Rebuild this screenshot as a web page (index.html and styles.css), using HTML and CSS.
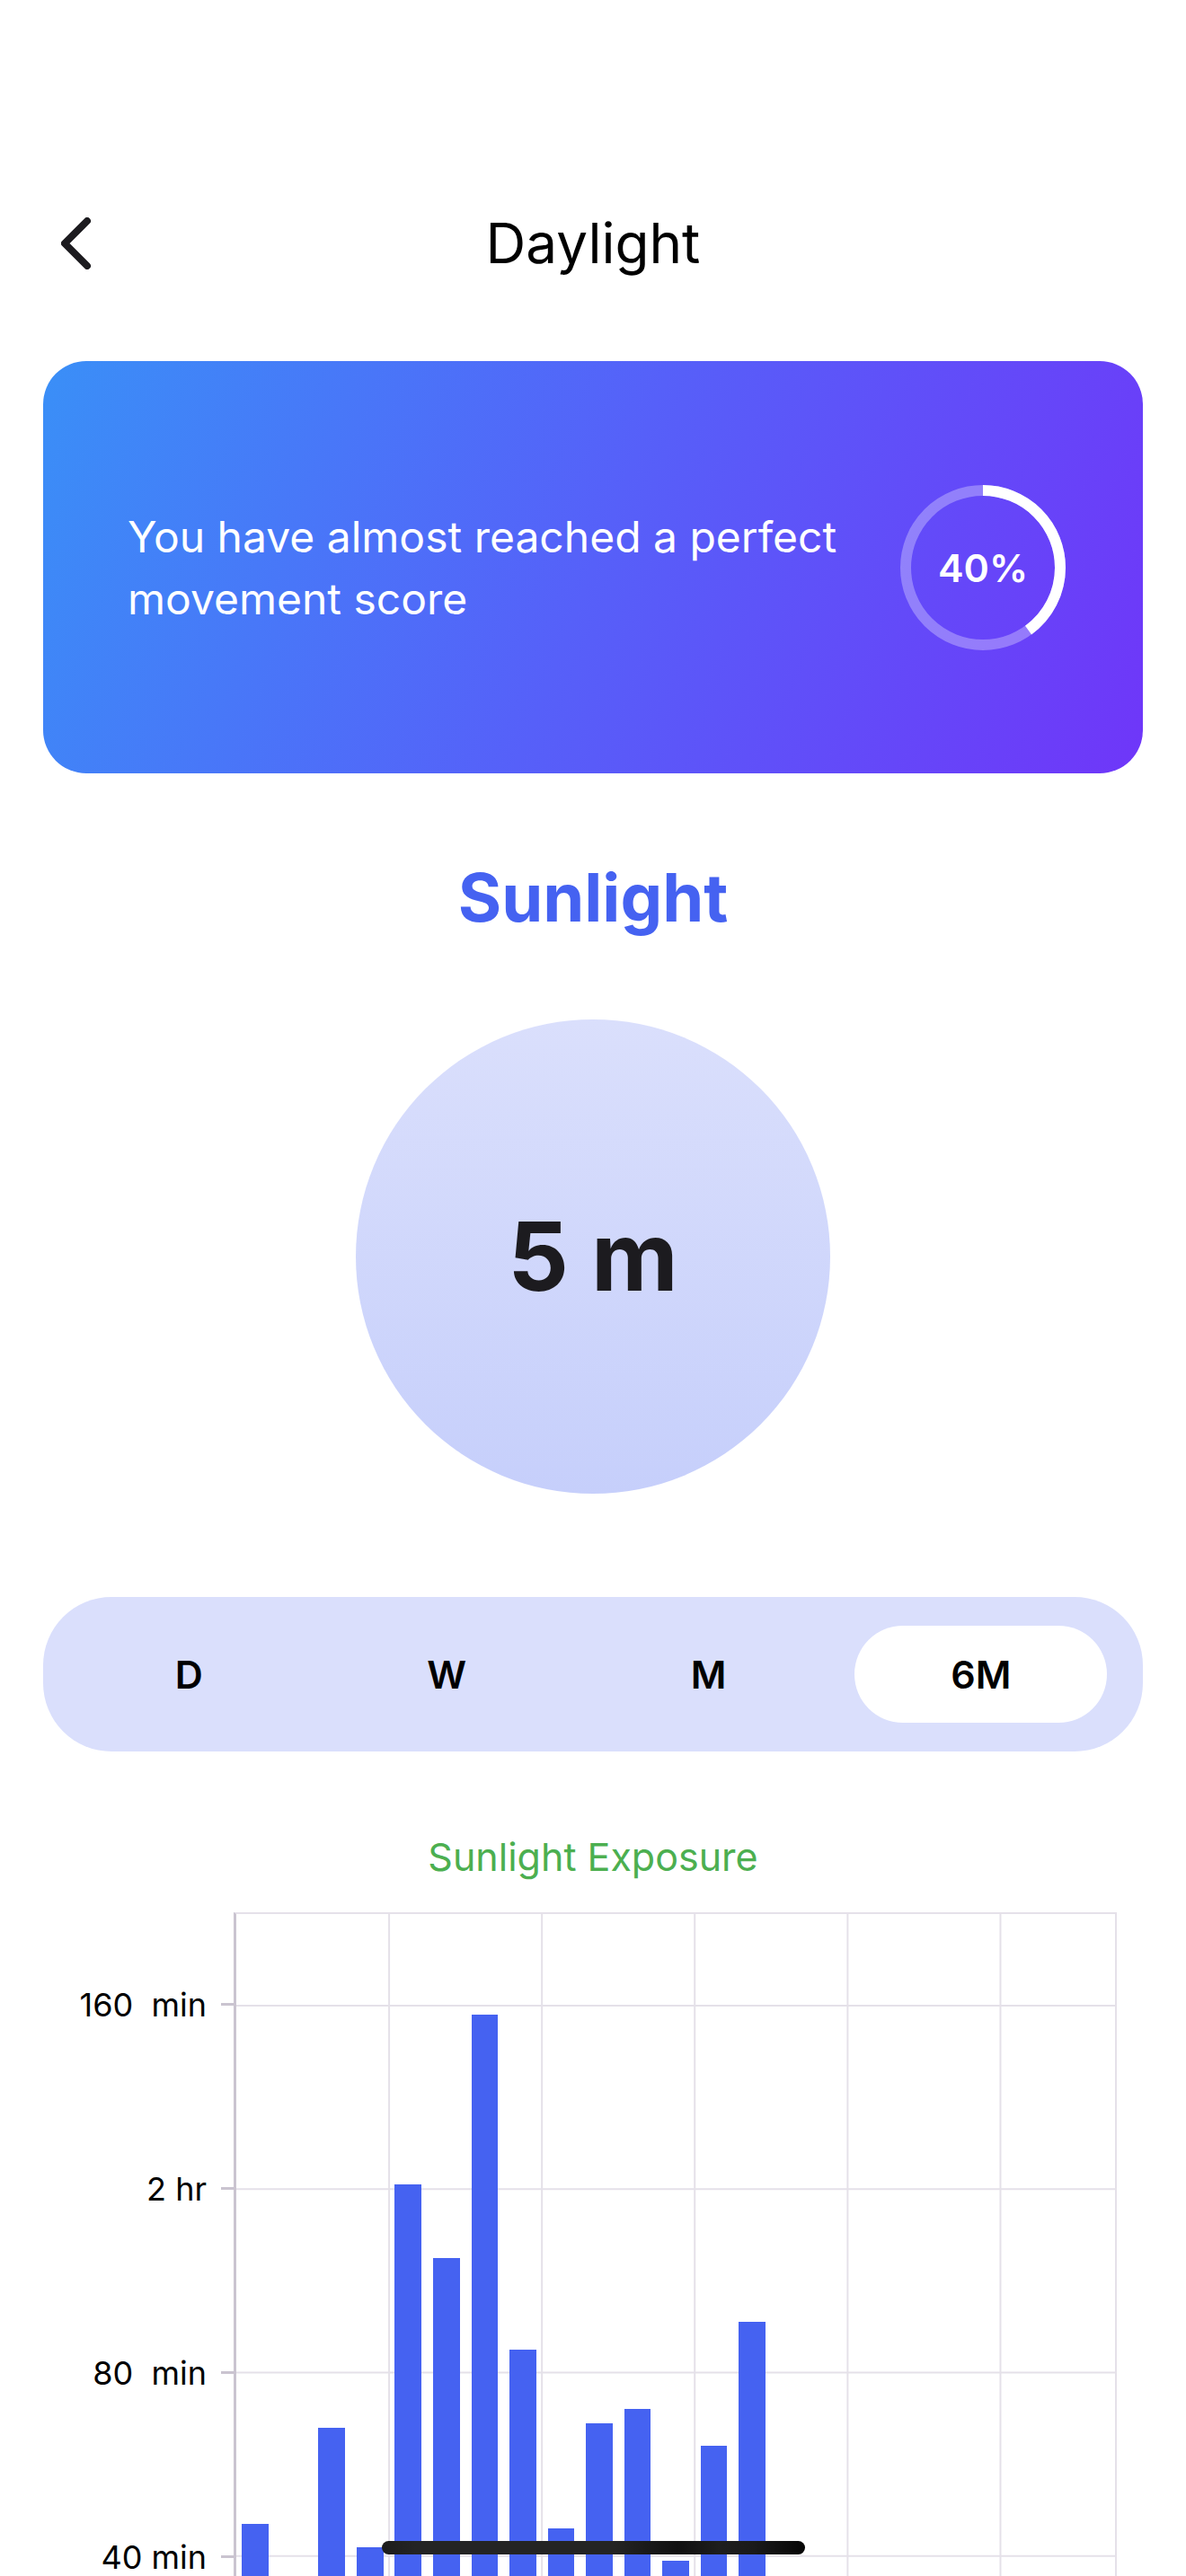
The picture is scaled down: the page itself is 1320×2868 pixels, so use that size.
FILE: index.html
```html
<!DOCTYPE html>
<html lang="en">
<head>
  <meta charset="utf-8">
  <meta name="viewport" content="width=device-width, initial-scale=1">
  <title>Daylight</title>
  <link rel="stylesheet" href="styles.css">
</head>
<body>
  <div class="screen">
    <header class="topbar">
      <button class="back" type="button" aria-label="Back">
        <svg class="back-icon" viewBox="0 0 34 58" aria-hidden="true"><path d="M29 4 4 29l25 25"/></svg>
      </button>
      <h1 class="title">Daylight</h1>
    </header>

    <main class="content">
      <section class="score-card">
        <p class="score-text">You have almost reached a perfect movement score</p>
        <div class="ring">
          <svg class="ring-art" viewBox="0 0 184 184" aria-hidden="true">
            <circle class="ring-track" cx="92" cy="92" r="86"/>
            <circle class="ring-value" cx="92" cy="92" r="86" pathLength="100" stroke-dasharray="40 60"/>
          </svg>
          <span class="ring-label">40%</span>
        </div>
      </section>

      <h2 class="metric">Sunlight</h2>
      <div class="total">5 m</div>

      <div class="ranges" role="group" aria-label="Range">
        <button class="range" type="button">D</button>
        <button class="range" type="button">W</button>
        <button class="range" type="button">M</button>
        <button class="range range-active" type="button" aria-pressed="true">6M</button>
      </div>

      <section class="exposure">
        <h3 class="exposure-title">Sunlight Exposure</h3>
        <div class="chart">
          <div class="axis">
            <span class="tick">160&nbsp; min</span>
            <span class="tick">2 hr</span>
            <span class="tick">80&nbsp; min</span>
            <span class="tick">40 min</span>
          </div>
          <div class="plot">
            <svg class="grid" aria-hidden="true">
              <line x1="0" x2="100%" y1="11.11%" y2="11.11%"/>
              <line x1="0" x2="100%" y1="33.33%" y2="33.33%"/>
              <line x1="0" x2="100%" y1="55.56%" y2="55.56%"/>
              <line x1="0" x2="100%" y1="77.78%" y2="77.78%"/>
              <line x1="17.39%" x2="17.39%" y1="0" y2="100%"/>
              <line x1="34.78%" x2="34.78%" y1="0" y2="100%"/>
              <line x1="52.17%" x2="52.17%" y1="0" y2="100%"/>
              <line x1="69.57%" x2="69.57%" y1="0" y2="100%"/>
              <line x1="86.96%" x2="86.96%" y1="0" y2="100%"/>
            </svg>
            <div class="bars">
              <i class="bar" style="height:26.11%"></i>
              <i class="bar" style="height:0%"></i>
              <i class="bar" style="height:37.78%"></i>
              <i class="bar" style="height:23.33%"></i>
              <i class="bar" style="height:67.22%"></i>
              <i class="bar" style="height:58.33%"></i>
              <i class="bar" style="height:87.78%"></i>
              <i class="bar" style="height:47.22%"></i>
              <i class="bar" style="height:25.56%"></i>
              <i class="bar" style="height:38.33%"></i>
              <i class="bar" style="height:40%"></i>
              <i class="bar" style="height:21.67%"></i>
              <i class="bar" style="height:35.56%"></i>
              <i class="bar" style="height:50.56%"></i>
            </div>
          </div>
        </div>
      </section>
    </main>

    <div class="home-indicator"></div>
  </div>
</body>
</html>
```
FILE: styles.css
```css
* {
  box-sizing: border-box;
}

body {
  margin: 0;
  background: #fff;
  color: #000;
  font-family: Inter, "Liberation Sans", sans-serif;
}

h1, h2, h3, p {
  margin: 0;
}

button {
  border: 0;
  background: none;
  color: inherit;
  font: inherit;
  cursor: pointer;
}

.screen {
  position: relative;
  height: 100vh;
  padding: 216px 48px 0;
  overflow: hidden;
}

.topbar {
  display: grid;
  grid-template-columns: 1fr auto 1fr;
  align-items: center;
  height: 110px;
}

.back {
  justify-self: start;
  display: flex;
  padding: 16px 20px;
}

.back-icon {
  width: 34px;
  height: 58px;
  fill: none;
  stroke: #1c1b1f;
  stroke-width: 8;
  stroke-linecap: round;
  stroke-linejoin: round;
}

.title {
  font-size: 62px;
  line-height: 80px;
  font-weight: 400;
}

.content {
  display: flex;
  flex-direction: column;
  padding-top: 76px;
}

.score-card {
  display: flex;
  align-items: center;
  justify-content: space-between;
  gap: 24px;
  min-height: 459px;
  padding: 48px 86px 48px 94px;
  border-radius: 48px;
  background: linear-gradient(111deg, #3a8ff7, #5660f9 50%, #6f36f9);
  color: #fff;
}

.score-text {
  font-size: 48px;
  line-height: 69px;
}

.ring {
  display: grid;
  flex: none;
  place-items: center;
  width: 184px;
  height: 184px;
}

.ring-art,
.ring-label {
  grid-area: 1 / 1;
}

.ring-art {
  width: 100%;
  height: 100%;
  fill: none;
  stroke-width: 12;
  transform: rotate(-90deg);
}

.ring-track {
  stroke: rgba(255, 255, 255, 0.3);
}

.ring-value {
  stroke: #fff;
}

.ring-label {
  font-size: 43px;
  line-height: 50px;
  font-weight: 600;
}

.metric {
  margin-top: 94px;
  color: #4562f1;
  font-size: 74px;
  line-height: 88px;
  font-weight: 700;
  text-align: center;
}

.total {
  display: grid;
  place-items: center;
  align-self: center;
  width: 528px;
  height: 528px;
  margin-top: 92px;
  border-radius: 50%;
  background: linear-gradient(#dadffc, #c6cffb);
  color: #1c1b1f;
  font-size: 106px;
  line-height: 128px;
  font-weight: 700;
}

.ranges {
  display: flex;
  align-items: center;
  justify-content: space-evenly;
  height: 172px;
  margin-top: 115px;
  padding: 0 4px;
  border-radius: 76px;
  background: #dadffc;
}

.range {
  height: 108px;
  padding: 0 107px;
  border-radius: 54px;
  font-size: 43px;
  line-height: 50px;
  font-weight: 600;
}

.range-active {
  background: #fff;
}

.exposure {
  margin-top: 92px;
}

.exposure-title {
  color: #4caf50;
  font-size: 43px;
  line-height: 50px;
  font-weight: 400;
  text-align: center;
}

.chart {
  display: grid;
  grid-template-columns: 212px 1fr;
  height: 923px;
  margin: 37px 29px 0 0;
}

.axis {
  display: grid;
  grid-template-rows: repeat(4, 2fr) 1fr;
}

.tick {
  display: flex;
  align-items: center;
  justify-content: flex-end;
  gap: 16px;
  font-size: 36px;
  line-height: 44px;
  white-space: nowrap;
}

.tick::after {
  content: "";
  width: 14px;
  height: 3px;
  background: #cac4d0;
}

.plot {
  display: grid;
  border: 2px solid #e5e1e9;
  border-left: 3px solid #cac4d0;
}

.grid,
.bars {
  grid-area: 1 / 1;
  width: 100%;
  height: 100%;
}

.grid line {
  stroke: #e5e1e9;
  stroke-width: 2;
}

.bars {
  display: grid;
  grid-template-columns: repeat(23, 1fr);
  align-items: end;
  justify-items: center;
}

.bar {
  width: 70%;
  background: #4562f1;
}

.home-indicator {
  position: absolute;
  bottom: 24px;
  left: 50%;
  width: 471px;
  height: 15px;
  margin-left: -235px;
  border-radius: 8px;
  background: linear-gradient(to right, #1c1c1c, #242424 8%, #242424 55%, #101010 70%, #1e1e1e 80%, #1a1a1a 88%, #060606);
}
```
